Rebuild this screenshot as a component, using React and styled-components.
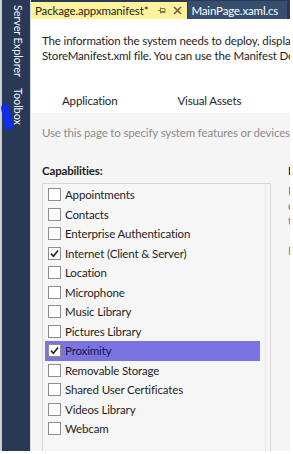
import React from 'react'
import styled, { createGlobalStyle } from 'styled-components'

const GlobalStyle = createGlobalStyle`
  html, body {
    margin: 0;
    padding: 0;
    background: #ffffff;
  }
  * {
    box-sizing: border-box;
  }
`

const FONT = `Lato, "Noto Sans", sans-serif`

const Screen = styled.div`
  width: 293px;
  height: 454px;
  padding: 0 3px 3px 0;
  background: #ffffff;
  font-family: ${FONT};
  font-size: 11.5px;
  letter-spacing: -0.15px;
  color: #1e1e1e;
  overflow: hidden;
`

const Frame = styled.div`
  display: flex;
  width: 100%;
  height: 100%;
`

const Sidebar = styled.div`
  position: relative;
  flex: 0 0 31px;
  display: flex;
  flex-direction: column;
  align-items: center;
  gap: 11px;
  padding-top: 5px;
  background: #293955;
  border-left: 2px solid #c9ced8;
  border-right: 1px solid #d8dde6;
`

const SideTab = styled.div`
  writing-mode: vertical-rl;
  color: #f0f3f8;
  font-size: 11px;
  line-height: 14px;
  margin-left: 3px;
  white-space: nowrap;
`

const Scribble = styled.div`
  position: absolute;
  left: 1px;
  top: 104px;
  width: 8px;
  height: 26px;
  border-radius: 5px;
  background: #0f2cf2;
  transform: rotate(-12deg);
`

const Main = styled.div`
  flex: 1;
  min-width: 0;
  display: flex;
  flex-direction: column;
  overflow: hidden;
`

const TabStrip = styled.div`
  flex: 0 0 19px;
  display: flex;
  align-items: flex-end;
  background: #293955;
`

const DocTab = styled.div`
  display: flex;
  align-items: center;
  height: ${({ $active }) => ($active ? '17px' : '18px')};
  padding: ${({ $active }) => ($active ? '0 5px 0 4px' : '0 9px 0 3px')};
  margin-left: ${({ $active }) => ($active ? '0' : '1px')};
  background: ${({ $active }) => ($active ? '#fff29d' : '#364e6f')};
  color: ${({ $active }) => ($active ? '#1e1e1e' : '#ffffff')};
  white-space: nowrap;
  line-height: 17px;
`

const TabIcons = styled.span`
  display: flex;
  align-items: center;
  gap: 7px;
  margin-left: 10px;
`

const Header = styled.div`
  flex: 0 0 94px;
  background: #ffffff;
  padding: 14px 0 0 11px;
`

const Intro = styled.div`
  white-space: nowrap;
  line-height: 15px;
`

const SubTabs = styled.div`
  display: flex;
  gap: 20px;
  margin-top: 30px;
  white-space: nowrap;
`

const SubTab = styled.div`
  padding: 0 20px;
  line-height: 16px;
`

const Body = styled.div`
  flex: 1;
  background: #f5f5f5;
  padding: 12px 0 0 11px;
  overflow: hidden;
`

const Hint = styled.div`
  color: #8b8b8b;
  white-space: nowrap;
  line-height: 16px;
`

const Columns = styled.div`
  display: flex;
  gap: 17px;
  margin-top: 22px;
`

const LeftColumn = styled.div`
  flex: 0 0 229px;
`

const RightColumn = styled.div`
  flex: 0 0 200px;
  white-space: nowrap;
`

const Label = styled.div`
  font-weight: 700;
  line-height: 16px;
`

const Description = styled.div`
  margin-top: 4px;
  color: #717171;
  line-height: 15px;
`

const ListBox = styled.div`
  margin-top: 4px;
  height: 300px;
  border: 1px solid #d6d6d6;
  background: #f6f6f6;
  display: flex;
`

const ItemsPane = styled.div`
  flex: 1;
  margin-right: 4px;
  padding: 1px 5px 0 2px;
  border-right: 1px solid #e4e4e4;
`

const Row = styled.div`
  display: flex;
  align-items: center;
  gap: 4px;
  height: 19.5px;
  padding-left: 3px;
  background: ${({ $selected }) => ($selected ? '#7a74e0' : 'transparent')};
  color: ${({ $selected }) => ($selected ? '#15154f' : '#1e1e1e')};
  white-space: nowrap;
`

function Pin() {
  return (
    <svg width="8" height="9" viewBox="0 0 8 9">
      <path d="M0 4.5h2.5M2.5 1.5v6M2.5 2.5h4.5v4H2.5M2.5 5.5h4.5" fill="none" stroke="#857a45" strokeWidth="1" />
    </svg>
  )
}

function Close() {
  return (
    <svg width="9" height="9" viewBox="0 0 9 9">
      <path d="M1 1l7 7M8 1l-7 7" stroke="#6d6236" strokeWidth="1.6" />
    </svg>
  )
}

function CheckBox({ checked }) {
  return (
    <svg width="13" height="13" viewBox="0 0 13 13">
      <rect x="0.5" y="0.5" width="12" height="12" fill="#ffffff" stroke="#8d8d8d" />
      {checked && (
        <path d="M3 6.6l2.4 2.6L10 3.6" fill="none" stroke="#222222" strokeWidth="1.6" />
      )}
    </svg>
  )
}

const capabilities = [
  { name: 'Appointments' },
  { name: 'Contacts' },
  { name: 'Enterprise Authentication' },
  { name: 'Internet (Client & Server)', checked: true },
  { name: 'Location' },
  { name: 'Microphone' },
  { name: 'Music Library' },
  { name: 'Pictures Library' },
  { name: 'Proximity', checked: true, selected: true },
  { name: 'Removable Storage' },
  { name: 'Shared User Certificates' },
  { name: 'Videos Library' },
  { name: 'Webcam' },
]

export default function App() {
  return (
    <Screen>
      <GlobalStyle />
      <Frame>
        <Sidebar>
          <SideTab>Server Explorer</SideTab>
          <SideTab>Toolbox</SideTab>
          <Scribble />
        </Sidebar>
        <Main>
          <TabStrip>
            <DocTab $active>
              Package.appxmanifest*
              <TabIcons>
                <Pin />
                <Close />
              </TabIcons>
            </DocTab>
            <DocTab>MainPage.xaml.cs</DocTab>
          </TabStrip>
          <Header>
            <Intro>
              The information the system needs to deploy, display, or update your app is contained in the Package.
            </Intro>
            <Intro>
              StoreManifest.xml file. You can use the Manifest Designer to set or modify one or more of the properties.
            </Intro>
            <SubTabs>
              <SubTab>Application</SubTab>
              <SubTab>Visual Assets</SubTab>
              <SubTab>Capabilities</SubTab>
              <SubTab>Declarations</SubTab>
            </SubTabs>
          </Header>
          <Body>
            <Hint>Use this page to specify system features or devices that your app can use.</Hint>
            <Columns>
              <LeftColumn>
                <Label>Capabilities:</Label>
                <ListBox>
                  <ItemsPane>
                    {capabilities.map(c => (
                      <Row key={c.name} $selected={c.selected}>
                        <CheckBox checked={c.checked} />
                        {c.name}
                      </Row>
                    ))}
                  </ItemsPane>
                </ListBox>
              </LeftColumn>
              <RightColumn>
                <Label>Description:</Label>
                <Description>
                  Provides access to near field proximity
                  <br />
                  devices, which lets your app connect
                  <br />
                  to devices in close range.
                  <br />
                  <br />
                  More information
                </Description>
              </RightColumn>
            </Columns>
          </Body>
        </Main>
      </Frame>
    </Screen>
  )
}
